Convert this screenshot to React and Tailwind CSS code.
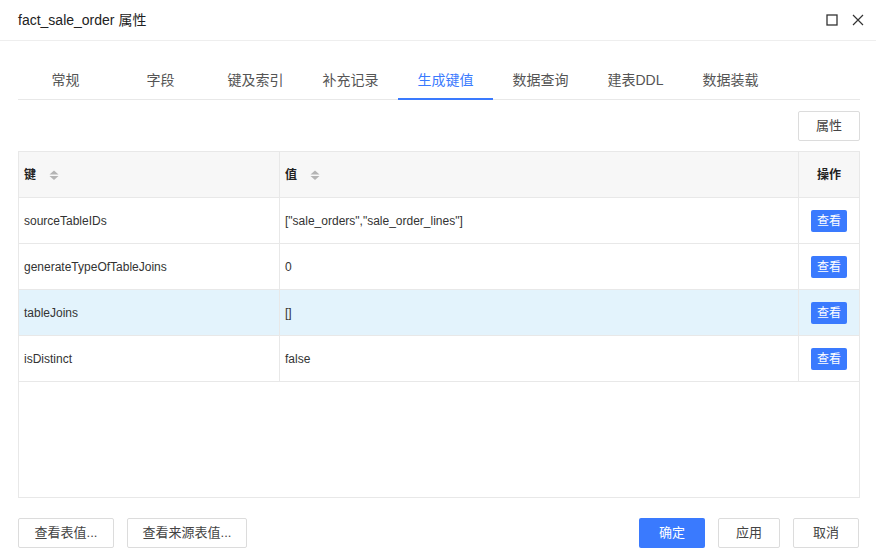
import React from 'react'

const FONT = { fontFamily: '"Liberation Sans", Arial, "Noto Sans CJK SC", sans-serif' }

const tabs = ['常规', '字段', '键及索引', '补充记录', '生成键值', '数据查询', '建表DDL', '数据装载']
const rows = [
  ['sourceTableIDs', '["sale_orders","sale_order_lines"]'],
  ['generateTypeOfTableJoins', '0'],
  ['tableJoins', '[]'],
  ['isDistinct', 'false'],
]

function SortIcon() {
  return (
    <svg width="10" height="12" viewBox="0 0 10 12" className="ml-[13px]">
      <path d="M5 1.5 L9.5 5.5 L0.5 5.5 Z" fill="#b4b4b4" />
      <path d="M5 11 L9.5 7 L0.5 7 Z" fill="#b4b4b4" />
    </svg>
  )
}

export default function App() {
  return (
    <div className="w-[876px] h-[557px] bg-white flex flex-col text-[#333]" style={FONT}>
      <div className="h-[41px] flex items-center justify-between pl-[18px] pr-[12px] border-b border-[#eeeeee]">
        <span className="text-[14px] text-[#222]">fact_sale_order 属性</span>
        <div className="flex items-center gap-[14px]">
          <svg width="12" height="12" viewBox="0 0 12 12">
            <rect x="1" y="1" width="10" height="10" fill="none" stroke="#333" strokeWidth="1.3" />
          </svg>
          <svg width="12" height="12" viewBox="0 0 12 12">
            <path d="M1 1 L11 11 M11 1 L1 11" stroke="#333" strokeWidth="1.2" />
          </svg>
        </div>
      </div>

      <div className="pl-[18px] pr-[16px] pt-[21px]">
        <div className="flex border-b border-[#e8e8e8]">
          {tabs.map((t, i) => (
            <div
              key={t}
              className={
                'w-[95px] h-[38px] flex items-center justify-center text-[14px] border-b-2 -mb-[1px] ' +
                (i === 4 ? 'text-[#3a7afe] border-[#3a7afe]' : 'text-[#555] border-transparent')
              }
            >
              {t}
            </div>
          ))}
        </div>
      </div>

      <div className="flex justify-end pr-[16px] mt-[11px]">
        <button className="w-[62px] h-[30px] border border-[#dcdcdc] rounded-[2px] text-[13px] text-[#444] bg-white">属性</button>
      </div>

      <div className="ml-[18px] w-[842px] mt-[10px] h-[347px] border border-[#e8e8e8] flex flex-col text-[12px]">
        <div className="flex h-[46px] bg-[#f7f7f7] border-b border-[#e8e8e8] font-bold text-[#222]">
          <div className="w-[261px] border-r border-[#e8e8e8] flex items-center pl-[5px]">键<SortIcon /></div>
          <div className="flex-1 border-r border-[#e8e8e8] flex items-center pl-[5px]">值<SortIcon /></div>
          <div className="w-[60px] flex items-center justify-center">操作</div>
        </div>
        {rows.map(([k, v], i) => (
          <div key={k} className={'flex h-[46px] border-b border-[#e8e8e8] ' + (i === 2 ? 'bg-[#e3f3fc]' : 'bg-white')}>
            <div className="w-[261px] border-r border-[#e8e8e8] flex items-center pl-[5px]">{k}</div>
            <div className="flex-1 border-r border-[#e8e8e8] flex items-center pl-[5px]">{v}</div>
            <div className="w-[60px] flex items-center justify-center">
              <button className="w-[36px] h-[22px] bg-[#3a7afe] text-white rounded-[2px] text-[12px]">查看</button>
            </div>
          </div>
        ))}
      </div>

      <div className="flex items-center justify-between pl-[18px] pr-[17px] mt-[20px]">
        <div className="flex gap-[13px]">
          <button className="w-[96px] h-[30px] border border-[#dcdcdc] rounded-[2px] text-[13px] text-[#444] bg-white">查看表值...</button>
          <button className="w-[120px] h-[30px] border border-[#dcdcdc] rounded-[2px] text-[13px] text-[#444] bg-white">查看来源表值...</button>
        </div>
        <div className="flex gap-[13px]">
          <button className="w-[66px] h-[30px] rounded-[2px] text-[13px] text-white bg-[#3a7afe]">确定</button>
          <button className="w-[62px] h-[30px] border border-[#dcdcdc] rounded-[2px] text-[13px] text-[#444] bg-white">应用</button>
          <button className="w-[66px] h-[30px] border border-[#dcdcdc] rounded-[2px] text-[13px] text-[#444] bg-white">取消</button>
        </div>
      </div>
    </div>
  )
}
